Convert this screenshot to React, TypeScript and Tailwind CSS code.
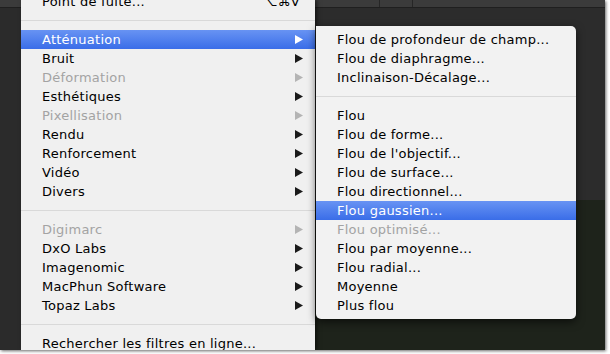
type Item =
    | { sep: true }
    | { sep?: false; label: string; sub?: boolean; disabled?: boolean; active?: boolean; shortcut?: string };

const mainItems: Item[] = [
    { label: 'Point de fuite...', shortcut: '⌥⌘V' },
    { sep: true },
    { label: 'Atténuation', sub: true, active: true },
    { label: 'Bruit', sub: true },
    { label: 'Déformation', sub: true, disabled: true },
    { label: 'Esthétiques', sub: true },
    { label: 'Pixellisation', sub: true, disabled: true },
    { label: 'Rendu', sub: true },
    { label: 'Renforcement', sub: true },
    { label: 'Vidéo', sub: true },
    { label: 'Divers', sub: true },
    { sep: true },
    { label: 'Digimarc', sub: true, disabled: true },
    { label: 'DxO Labs', sub: true },
    { label: 'Imagenomic', sub: true },
    { label: 'MacPhun Software', sub: true },
    { label: 'Topaz Labs', sub: true },
    { sep: true },
    { label: 'Rechercher les filtres en ligne...' },
];

const blurItems: Item[] = [
    { label: 'Flou de profondeur de champ...' },
    { label: 'Flou de diaphragme...' },
    { label: 'Inclinaison-Décalage...' },
    { sep: true },
    { label: 'Flou' },
    { label: 'Flou de forme...' },
    { label: "Flou de l'objectif..." },
    { label: 'Flou de surface...' },
    { label: 'Flou directionnel...' },
    { label: 'Flou gaussien...', active: true },
    { label: 'Flou optimisé...', disabled: true },
    { label: 'Flou par moyenne...' },
    { label: 'Flou radial...' },
    { label: 'Moyenne' },
    { label: 'Plus flou' },
];

function Arrow({ color }: { color: string }) {
    return (
        <svg width="8" height="9" viewBox="0 0 8 9" className="shrink-0">
            <polygon points="0,0 8,4.5 0,9" fill={color} />
        </svg>
    );
}

function MenuRows({ items }: { items: Item[] }) {
    return (
        <>
            {items.map((item, i) =>
                item.sep ? (
                    <div key={i} className="flex h-[19px] items-center">
                        <div className="h-px w-full bg-[#d9d9d9]" />
                    </div>
                ) : (
                    <div
                        key={i}
                        className={
                            item.active
                                ? 'flex h-[19px] items-center justify-between bg-gradient-to-b from-[#6893f3] to-[#3a6de8] pr-[12px] pl-[21px] text-white'
                                : item.disabled
                                  ? 'flex h-[19px] items-center justify-between pr-[12px] pl-[21px] text-[#a3a3a3]'
                                  : 'flex h-[19px] items-center justify-between pr-[12px] pl-[21px] text-black'
                        }
                    >
                        <span className="whitespace-nowrap">{item.label}</span>
                        {item.sub && <Arrow color={item.active ? '#ffffff' : item.disabled ? '#b4b4b4' : '#1a1a1a'} />}
                        {item.shortcut && <span className="pr-[3px] whitespace-nowrap">{item.shortcut}</span>}
                    </div>
                ),
            )}
        </>
    );
}

export default function App() {
    return (
        <div className="h-[354px] w-[610px] bg-white" style={{ fontFamily: '"DejaVu Sans", sans-serif' }}>
            <div className="flex h-[350px] w-[605px] overflow-hidden bg-[#2c2c2c] text-[13px] leading-none tracking-[0.25px] shadow-[1px_1px_3px_rgba(0,0,0,0.6)]">
                {/* left strip of the app window */}
                <div className="flex w-[21px] shrink-0 flex-col">
                    <div className="h-[8px] border-b border-[#1f1f1f] bg-[#3b3b3b]" />
                    <div className="flex-1 bg-[#2b2b2b]" />
                </div>

                {/* Filtre menu */}
                <div className="relative z-20 w-[294px] shrink-0 bg-[#f0f0f0] shadow-[2px_0_4px_rgba(0,0,0,0.55)]">
                    <div className="-mt-[8px]">
                        <MenuRows items={mainItems} />
                    </div>
                </div>

                {/* app area behind submenu */}
                <div className="relative flex flex-1 flex-col">
                    <div className="flex h-[8px] border-b border-[#1f1f1f] bg-[#3b3b3b]">
                        <div className="w-[65px] border-r border-[#262626]" />
                        <div className="w-[33px] border-r border-[#262626]" />
                    </div>
                    <div className="h-[192px] bg-[#2c2c2c]" />
                    <div className="flex-1 bg-[#1e231b]" />

                    {/* Atténuation submenu */}
                    <div className="absolute top-[26px] left-px z-30 w-[260px] rounded-[5px] rounded-tl-none bg-[#f2f2f2] py-[4px] shadow-[0_3px_8px_rgba(0,0,0,0.6)]">
                        <MenuRows items={blurItems} />
                    </div>
                </div>
            </div>
        </div>
    );
}
